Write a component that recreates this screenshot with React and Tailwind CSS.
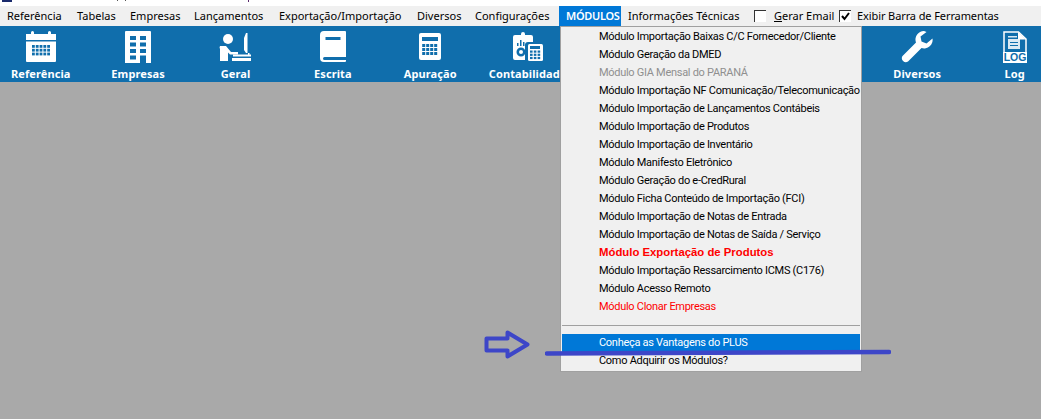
const MENU_BAR = [
  ['Referência', 'w-[70px]'],
  ['Tabelas', 'w-[53px]'],
  ['Empresas', 'w-[64px]'],
  ['Lançamentos', 'w-[85px]'],
  ['Exportação/Importação', 'w-[138px]'],
  ['Diversos', 'w-[58px]'],
  ['Configurações', 'w-[84px]'],
]

const MODULES = [
  { label: 'Módulo Importação Baixas C/C Fornecedor/Cliente' },
  { label: 'Módulo Geração da DMED' },
  { label: 'Módulo GIA Mensal do PARANÁ', tone: 'disabled' },
  { label: 'Módulo Importação NF Comunicação/Telecomunicação' },
  { label: 'Módulo Importação de Lançamentos Contábeis' },
  { label: 'Módulo Importação de Produtos' },
  { label: 'Módulo Importação de Inventário' },
  { label: 'Módulo Manifesto Eletrônico' },
  { label: 'Módulo Geração do e-CredRural' },
  { label: 'Módulo Ficha Conteúdo de Importação (FCI)' },
  { label: 'Módulo Importação de Notas de Entrada' },
  { label: 'Módulo Importação de Notas de Saída / Serviço' },
  { label: 'Módulo Exportação de Produtos', tone: 'bold' },
  { label: 'Módulo Importação Ressarcimento ICMS (C176)' },
  { label: 'Módulo Acesso Remoto' },
  { label: 'Módulo Clonar Empresas', tone: 'red' },
]

const CalendarIcon = () => (
  <svg width="30" height="31" viewBox="0 0 30 31" fill="#fff">
    <path d="M0 3h5v-1.500a1.500 1.500 0 0 1 3 0v1.500h14v-1.500a1.500 1.500 0 0 1 3 0v1.500h5v6h-30zM0 10.500h30v19.500a1 1 0 0 1-1 1h-28a1 1 0 0 1-1-1z" />
    <g fill="#106eac">
      {[0, 1, 2, 3, 4].map((c) => [0, 1, 2].map((r) => (
        <rect key={`${c}-${r}`} x={6 + c * 3.8} y={14 + r * 3.8} width="2.800" height="2.800" />
      )))}
    </g>
  </svg>
)

const BuildingIcon = () => (
  <svg width="26" height="32" viewBox="0 0 26 32" fill="#fff">
    <path d="M1 0h24a1 1 0 0 1 1 1v31h-26v-31a1 1 0 0 1 1-1z" />
    <g fill="#106eac">
      {[0, 1, 2].map((r) => (
        <g key={r}>
          <rect x="5" y={5 + r * 6.500} width="6" height="4" />
          <rect x="15" y={5 + r * 6.500} width="6" height="4" />
        </g>
      ))}
      <rect x="5" y="24.500" width="6" height="4" />
      <rect x="15" y="24.500" width="6" height="7.500" />
    </g>
  </svg>
)

const DeskIcon = () => (
  <svg width="32" height="28" viewBox="0 0 32 28" fill="#fff">
    <circle cx="9" cy="6" r="5" />
    <path d="M1 13h6l5 6h7v2.500h-8l-2-2v8.500h-8v-12a3 3 0 0 1 0-3z" />
    <path d="M27 0h1.500v20h-1.500l-2-3v-12zM29 20h1.500v2h-1.500z" />
    <path d="M14 21.500h18v2h-18zM13 25h19v3h-19z" />
  </svg>
)

const BookIcon = () => (
  <svg width="26" height="31" viewBox="0 0 26 31" fill="#fff">
    <path d="M4 0h21a1 1 0 0 1 1 1v25h-21.500a1.500 1.500 0 0 0 0 3h21.500v1a1 1 0 0 1-1 1h-21a4 4 0 0 1-4-4v-23a4 4 0 0 1 4-4z" />
    <rect x="5.500" y="6" width="15" height="3" fill="#106eac" />
  </svg>
)

const CalcIcon = () => (
  <svg width="22" height="27" viewBox="0 0 22 27" fill="#fff">
    <rect width="22" height="27" rx="2" />
    <rect x="3" y="4" width="16" height="4" fill="#106eac" />
    <g fill="#106eac">
      {[0, 1, 2, 3].map((c) => [0, 1, 2].map((r) => (
        <rect key={`${c}-${r}`} x={3.200 + c * 4} y={11 + r * 4} width="3" height="3" />
      )))}
    </g>
  </svg>
)

const ClipboardIcon = () => (
  <svg width="30" height="29" viewBox="0 0 30 29" fill="#fff">
    <path d="M2 3h6v-1a2 2 0 0 1 4 0v1h6a2 2 0 0 1 2 2v5h-5a3 3 0 0 0-3 3v15h-10a2 2 0 0 1-2-2v-21a2 2 0 0 1 2-2z" />
    <rect x="14" y="11" width="16" height="18" rx="2" fill="#106eac" />
    <rect x="15" y="12" width="15" height="17" rx="1.500" />
    <rect x="17" y="14" width="10" height="3" fill="#106eac" />
    <g fill="#106eac">
      {[0, 1, 2].map((c) => [0, 1, 2].map((r) => (
        <rect key={`${c}-${r}`} x={17 + c * 3.800} y={18.500 + r * 3.200} width="2.600" height="2.200" />
      )))}
      <path d="M4 11h1.500v3h-1.500zM7 8h1.500v6h-1.500zM10 10h1.500v4h-1.500z" />
      <path fillRule="evenodd" d="M8 15.500a4.500 4.500 0 1 0 0 9a4.500 4.500 0 0 0 0-9zm0 2.500a2 2 0 1 1 0 4a2 2 0 0 1 0-4z" />
    </g>
  </svg>
)

const WrenchIcon = () => (
  <svg width="32" height="32" viewBox="0 0 32 32" fill="#fff">
    <path d="M23 0a8.500 8.500 0 0 0-8 11.500l-13.500 13.500a4 4 0 0 0 5.500 5.500l13.500-13.500a8.500 8.500 0 0 0 11-9.500l-6 5-5-2-1-5 6-4.500a8.500 8.500 0 0 0-2.500-1z" />
  </svg>
)

const LogIcon = () => (
  <svg width="24" height="32" viewBox="0 0 24 32">
    <path d="M1 1h14.500l7.500 7v14h-22z" fill="none" stroke="#fff" strokeWidth="1.500" />
    <path d="M15 1l8 7.500h-8z" fill="#fff" />
    <path d="M5 5h9v1.500h-9zM5 8h12v10h-12z" fill="#fff" opacity="0.85" />
    <path d="M7 11h8v1h-8zM7 14h8v1h-8z" fill="#106eac" />
    <rect y="21" width="24" height="11" fill="#fff" />
    <text x="12" y="30" textAnchor="middle" fontSize="10.500" fontWeight="700" fill="#106eac" fontFamily="Liberation Sans, sans-serif">LOG</text>
  </svg>
)

const TOOLBAR = [
  { label: 'Referência', icon: <CalendarIcon /> },
  { label: 'Empresas', icon: <BuildingIcon /> },
  { label: 'Geral', icon: <DeskIcon /> },
  { label: 'Escrita', icon: <BookIcon /> },
  { label: 'Apuração', icon: <CalcIcon /> },
  { label: 'Contabilidade', icon: <ClipboardIcon /> },
  {},
  {},
  {},
  { label: 'Diversos', icon: <WrenchIcon /> },
  { label: 'Log', icon: <LogIcon /> },
]

const toneClass = {
  disabled: 'text-[#8f8f8f]',
  bold: "text-[#ff0000] font-bold font-['Liberation_Sans',sans-serif] text-[11.35px] tracking-normal",
  red: 'text-[#ff0000]',
}

const MenuRow = ({ label, tone, active }) => (
  <div className={`h-[18px] pl-[37px] flex items-center whitespace-nowrap ${active ? 'bg-[#0078d7] text-white' : toneClass[tone] || 'text-black'}`}>
    {label}
  </div>
)

const Checkbox = ({ checked }) => (
  <span className="w-[12px] h-[12px] bg-white border-t border-l border-[#333] flex items-center justify-center">
    {checked && (
      <svg width="9" height="9" viewBox="0 0 9 9">
        <path d="M1 4l2.500 3L8 1" fill="none" stroke="#000" strokeWidth="2" />
      </svg>
    )}
  </span>
)

export default function App() {
  return (
    <div className="relative w-[1041px] h-[419px] overflow-hidden bg-[#a9a9a9] font-['Noto_Sans',sans-serif]">
      <div className="h-[6px] bg-white">
        <svg width="260" height="4" viewBox="0 0 260 4">
          <rect x="2" width="10" height="2" fill="#1a2a6c" />
          <rect x="117" width="1" height="1" fill="#555" />
          <rect x="125" width="1" height="1" fill="#555" />
          <rect x="248" width="1" height="2" fill="#5a2a6c" />
        </svg>
      </div>

      <div className="h-[20px] bg-[#f0f0f0] flex items-center pl-[7px] text-[11px] text-black">
        {MENU_BAR.map(([label, width]) => (
          <div key={label} className={`${width} whitespace-nowrap`}>{label}</div>
        ))}
        <div className="w-[62px] h-[20px] pl-[7px] bg-[#0078d7] text-white font-semibold tracking-[-0.3px] flex items-center">MÓDULOS</div>
        <div className="ml-[7px] w-[126px] whitespace-nowrap">Informações Técnicas</div>
        <Checkbox />
        <span className="ml-[8px] w-[65px] whitespace-nowrap"><span className="underline">G</span>erar Email</span>
        <Checkbox checked />
        <span className="ml-[6px] whitespace-nowrap tracking-[-0.1px]">Exibir Barra de Ferramentas</span>
      </div>

      <div className="h-[56px] bg-[#106eac] flex -ml-[8px]">
        {TOOLBAR.map((item, i) => (
          <div key={i} className="w-[97.4px] shrink-0 flex flex-col items-center">
            <div className="h-[41px] flex items-center justify-center">{item.icon}</div>
            <div className="text-[11px] font-bold tracking-[0.1px] text-white whitespace-nowrap leading-[14px]">{item.label}</div>
          </div>
        ))}
      </div>

      <div className="absolute left-[560px] top-[26px] w-[302px] h-[346px] bg-[#f0f0f0] border border-[#a0a0a0] p-px font-['Roboto',sans-serif] text-[11px] tracking-[-0.29px]">
        {MODULES.map((m) => <MenuRow key={m.label} {...m} />)}
        <div className="h-[18px] flex items-center">
          <div className="w-full h-px bg-[#a0a0a0]" />
        </div>
        <MenuRow label="Conheça as Vantagens do PLUS" active />
        <MenuRow label="Como Adquirir os Módulos?" />
      </div>

      <svg className="absolute left-[484px] top-[329px]" width="46" height="30" viewBox="0 0 46 30">
        <path d="M2.500 9.500h21v-6l20 12-20 12v-6h-21z" fill="none" stroke="#3d46c8" strokeWidth="4" strokeLinejoin="round" />
      </svg>
      <svg className="absolute left-[545px] top-[348px]" width="346" height="8" viewBox="0 0 346 8">
        <path d="M2 5.500L344 4" stroke="#3d46c8" strokeWidth="4.500" strokeLinecap="round" />
      </svg>
    </div>
  )
}
